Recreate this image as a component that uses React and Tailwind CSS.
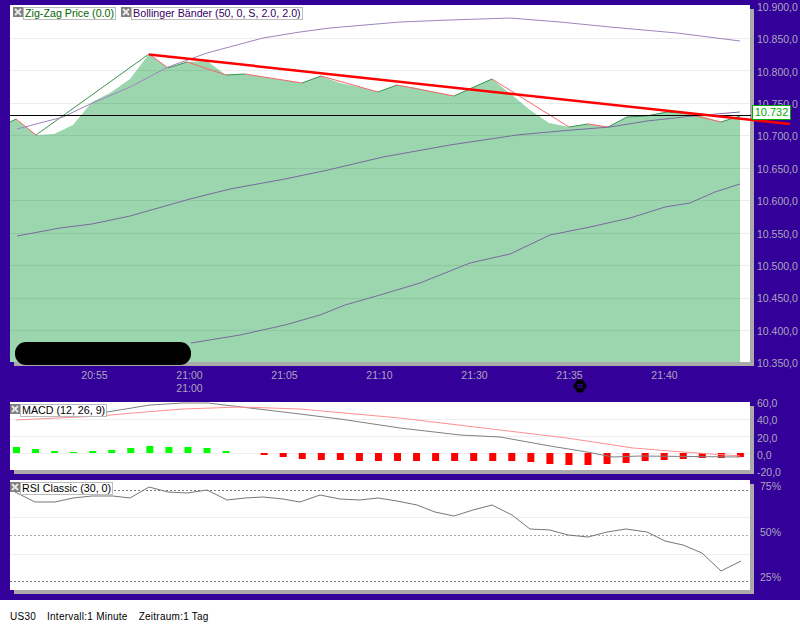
const sans = "font-['Liberation_Sans',Arial,sans-serif]";

// price chart
const area = "10,122 16,119 36,135 54,134 73,125 92,102 110,93 130,79 149,54 168,68 187,62 207,61 226,75 245,74 263,77 283,80 302,83 321,76 340,83 359,87 378,92 397,85 417,88 435,92 454,96 473,87 492,79 512,95 530,110 549,123 569,127 588,124 608,127 627,117 646,116 667,112 683,113 702,116 721,122 740,116 740,362 10,362";
const zigUp = ["10,122 16,119", "36,135 149,54", "168,68 187,62", "226,75 245,74", "302,83 321,76", "378,92 397,85", "454,96 492,79", "569,127 588,124", "608,127 627,117 646,116 667,112 683,113", "721,122 740,116"];
const zigDown = ["16,119 36,135", "149,54 168,68", "187,62 226,75", "245,74 302,83", "321,76 378,92", "397,85 454,96", "492,79 569,127", "588,124 608,127", "683,113 721,122"];
const upper = "17,129 63,117 88,105 130,87 168,67 207,53 263,38 300,32 330,28 400,22 450,20 510,18 560,22 610,27 677,33 740,41";
const middle = "17,236 60,228 92,224 130,216 190,199 230,189 285,179 328,170 383,157 450,145 517,135 560,131 610,127 647,121 693,116 740,112";
const lower = "191,343 240,335 285,325 320,315 345,305 380,295 420,283 470,263 510,254 550,235 590,227 630,218 665,207 690,203 715,192 740,184";
const priceGrid = [38.5, 70.5, 103.5, 135.5, 168.5, 200.5, 233.5, 265.5, 298.5, 330.5];

// macd
const macdGreen = [447, 449, 451, 452, 451, 450, 448, 446, 447, 447, 448, 451];
const macdRed = [455, 457, 459, 460, 460, 461, 461, 461, 461, 461, 461, 461, 461, 461, 462, 464, 465, 465, 464, 463, 461, 460, 459, 458, 458, 457];
const macdLine = "107,412 150,405 183,403 208,403 233,406 300,414 340,419 400,428 460,435 500,437 550,446 587,452 613,457 640,456 740,457";
const signalLine = "16,420 100,416 133,413 183,409 240,407 300,409 400,418 500,430 567,438 633,448 683,452 740,456";

const rsiLine = "15,492 35,502 55,502 73,498 92,496 113,496 130,498 149,487 168,492 187,493 207,490 227,500 245,498 263,497 283,499 300,502 320,495 340,499 360,500 378,498 397,501 417,505 435,512 454,516 473,510 492,505 512,515 530,529 550,530 568,535 588,537 607,532 626,529 647,532 665,541 683,545 702,553 721,571 741,561";

const priceLabels = ["10.900,0", "10.850,0", "10.800,0", "10.750,0", "10.700,0", "10.650,0", "10.600,0", "10.550,0", "10.500,0", "10.450,0", "10.400,0", "10.350,0"];
const times = [["20:55"], ["21:00", "21:00"], ["21:05"], ["21:10"], ["21:30"], ["21:35"], ["21:40"]];

function CloseIcon() {
  return (
    <span className="flex w-[10px] h-[10px] shrink-0 items-center justify-center bg-[#7f7f7f]">
      <svg width="8" height="8" viewBox="0 0 8 8">
        <path d="M1 1L7 7M7 1L1 7" stroke="#e8e8e8" strokeWidth="2" />
      </svg>
    </span>
  );
}

function Legend({ label, color }) {
  return (
    <div className="flex items-start">
      <CloseIcon />
      <span className={`h-[13px] border border-[#bbbbbb] bg-white px-px text-[10.7px] leading-[11px] whitespace-nowrap ${color}`}>{label}</span>
    </div>
  );
}

function Axis({ labels, className }) {
  return (
    <div className={`flex flex-col justify-between ml-[7px] text-[10.5px] leading-[14px] text-[#aca6bc] ${className}`}>
      {labels.map((l) => (
        <span key={l}>{l}</span>
      ))}
    </div>
  );
}

function Chart({ top, height, children }) {
  return (
    <svg className="absolute inset-0 overflow-visible" width="740" height={height} viewBox={`10 ${top} 740 ${height}`} fill="none">
      {children}
    </svg>
  );
}

export default function App() {
  return (
    <div className={`w-[800px] h-[625px] bg-white overflow-hidden ${sans}`}>
      <div className="h-[600px] bg-[#330099] pt-[5px] pl-[10px]">
        {/* Price panel */}
        <div className="flex items-start h-[357px]">
          <div className="relative w-[740px] h-[357px] shrink-0 bg-white shadow-[4px_4px_0_#aaaaaa]">
            <Chart top={5} height={357}>
              <polygon points={area} fill="#9bd6ae" />
              {priceGrid.map((y) => (
                <line key={y} x1="10" x2="750" y1={y} y2={y} stroke="#000" strokeOpacity="0.07" />
              ))}
              {zigUp.map((p) => (
                <polyline key={p} points={p} stroke="#3f9150" />
              ))}
              {zigDown.map((p) => (
                <polyline key={p} points={p} stroke="#f4656a" />
              ))}
              <polyline points={upper} stroke="#a084bc" />
              <polyline points={middle} stroke="#7a6a9f" />
              <polyline points={lower} stroke="#7a6a9f" />
              <line x1="10" x2="751" y1="115.5" y2="115.5" stroke="#000" />
              <line x1="149" y1="54.5" x2="790" y2="124" stroke="#ff0000" strokeWidth="2.5" />
            </Chart>
            <div className="absolute left-[3px] top-[2px] flex gap-[5px]">
              <Legend label="Zig-Zag Price (0.0)" color="text-[#006600]" />
              <Legend label="Bollinger Bänder (50, 0, S, 2.0, 2.0)" color="text-[#330066]" />
            </div>
            <div className="absolute left-[5px] top-[337px] w-[176px] h-[23px] rounded-[11px] bg-black" />
          </div>
          <Axis labels={priceLabels} className="h-[370px] -mt-[5px]" />
          <div className="absolute left-[752px] top-[105px] w-[39px] h-[15px] border border-[#00aa00] bg-white text-center text-[11px] leading-[13px] text-[#00aa00]">10.732</div>
        </div>

        {/* Time axis */}
        <div className="relative flex h-[40px] pt-[7px] pl-[37px] text-[10.5px] leading-[13px] text-[#aca6bc]">
          {times.map((t, i) => (
            <div key={i} className="flex w-[95px] flex-col items-center">
              {t.map((s, j) => (
                <span key={j}>{s}</span>
              ))}
            </div>
          ))}
          <svg className="absolute left-[563px] top-[17px]" width="14" height="14" viewBox="0 0 14 14">
            <path d="M4.5 0.5H9.5L14 7L9.5 13.5H4.5L0 7Z" fill="#000" />
            <rect x="4" y="5" width="6" height="4" fill="#330099" />
            <rect x="4" y="6.5" width="6" height="1" fill="#000" />
          </svg>
        </div>

        {/* MACD panel */}
        <div className="flex items-start h-[68px]">
          <div className="relative w-[740px] h-[68px] shrink-0 bg-white shadow-[4px_4px_0_#aaaaaa]">
            <Chart top={402} height={68}>
              {[419.5, 436.5, 453.5].map((y) => (
                <line key={y} x1="10" x2="750" y1={y} y2={y} stroke="#eeeeee" />
              ))}
              {macdGreen.map((y, i) => (
                <rect key={i} x={13 + 19.05 * i} y={y} width="7" height={453 - y} fill="#00ff00" />
              ))}
              {macdRed.map((y, i) => (
                <rect key={i} x={13 + 19.05 * (i + 13)} y="453" width="7" height={y - 453} fill="#ff0000" />
              ))}
              <polyline points={macdLine} stroke="#808080" />
              <polyline points={signalLine} stroke="#ff9090" />
            </Chart>
            <div className="absolute left-0 top-[2px]">
              <Legend label="MACD (12, 26, 9)" color="text-black" />
            </div>
          </div>
          <Axis labels={["60,0", "40,0", "20,0", "0,0", "-20,0"]} className="h-[83px] -mt-[6px]" />
        </div>

        {/* RSI panel */}
        <div className="flex items-start h-[110px] mt-[10px]">
          <div className="relative w-[740px] h-[110px] shrink-0 bg-white shadow-[4px_4px_0_#aaaaaa]">
            <Chart top={480} height={110}>
              {[517.5, 554.5].map((y) => (
                <line key={y} x1="10" x2="750" y1={y} y2={y} stroke="#eeeeee" />
              ))}
              <line x1="10" x2="750" y1="490.5" y2="490.5" stroke="#777777" strokeDasharray="2 2" />
              <line x1="10" x2="750" y1="535.5" y2="535.5" stroke="#aaaaaa" strokeDasharray="2 2" />
              <line x1="10" x2="750" y1="581.5" y2="581.5" stroke="#777777" strokeDasharray="2 2" />
              <polyline points={rsiLine} stroke="#777777" />
            </Chart>
            <div className="absolute left-0 top-[2px]">
              <Legend label="RSI Classic (30, 0)" color="text-black" />
            </div>
          </div>
          <Axis labels={["75%", "50%", "25%"]} className="h-[105px] mt-[-1px] !ml-[10px]" />
        </div>
      </div>

      {/* Footer */}
      <div className="flex h-[25px] items-center gap-[11px] pl-[10px] pt-[7px] text-[10px] tracking-[0.25px] text-black">
        <span>US30</span>
        <span>Intervall:1 Minute</span>
        <span>Zeitraum:1 Tag</span>
      </div>
    </div>
  );
}
